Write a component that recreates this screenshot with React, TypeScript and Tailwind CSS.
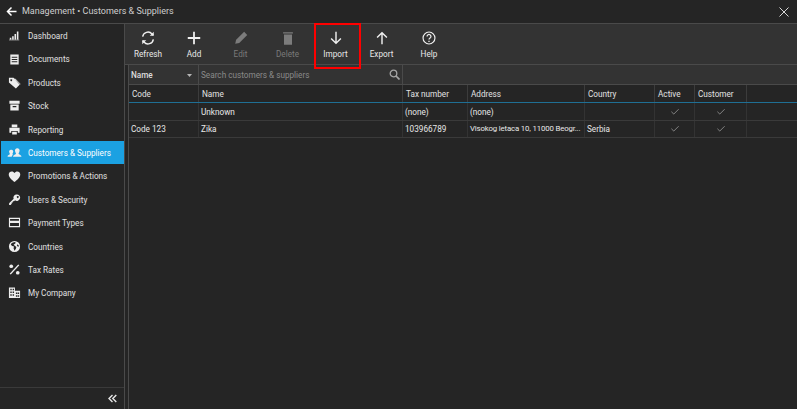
import React from "react";
import { Check } from "lucide-react";

const I = ({ children, w = 13 }: { children: React.ReactNode; w?: number }) => (
  <svg width={w} height={w} viewBox="0 0 14 14" fill="currentColor">{children}</svg>
);

const icons: Record<string, React.ReactNode> = {
  dash: <I w={11}><path d="M1 10h2v2H1zM4 8h2v4H4zM7 5h2v7H7zM10 2h2v10h-2zM0 12.300h13v.9H0z" /></I>,
  docs: <I><path fillRule="evenodd" d="M2.500 1.500h9v11h-9zM4 4v1h6V4zm0 2.500v1h6v-1zM4 9v1h6V9z" /></I>,
  prod: <I><path fillRule="evenodd" d="M1 2h5l7 7-4.500 4.500L1 7zm2.500 1.500a1 1 0 1 0 .01 0zM7 3h1l5.500 5.500-.8.8z" /></I>,
  stock: <I><path fillRule="evenodd" d="M1.500 2h11v3h-11zM2.500 6h9v6.500h-9zM5 7.500V9h4V7.500z" /></I>,
  rep: <I><path fillRule="evenodd" d="M4 1.500h6v3H4zM1.500 5h11v5.500H10.500V8.500h-7v2h-2zM4.500 9.500h5v3h-5z" /></I>,
  cust: <svg width="15" height="13" viewBox="0 0 16 14" fill="currentColor"><path d="M11 2.500a2.500 2.500 0 0 1 2.300 3.500c-.3 1-.9 1.600-.9 2.300 0 1 3.100 1 3.100 3.200H6.500c0-2.200 3.100-2.200 3.100-3.200 0-.7-.6-1.300-.9-2.300A2.500 2.500 0 0 1 11 2.500zM4.500 4a2 2 0 0 1 2 2.800c-.2.800-.7 1.300-.7 1.800 0 .4.300.6.700.8-.7.400-1.300 1-1.500 2.100H.5c0-2 2.500-1.900 2.500-2.900 0-.5-.5-1-.7-1.800A2 2 0 0 1 4.500 4z" /></svg>,
  heart: <I><path d="M7 13C4 10.500.8 8 .8 4.800.8 2.800 2.300 1.500 4 1.500c1.300 0 2.400.7 3 1.800.6-1.100 1.700-1.800 3-1.800 1.700 0 3.200 1.300 3.200 3.300C13.200 8 10 10.500 7 13z" /></I>,
  key: <I><path fillRule="evenodd" d="M9.500 1.500a3.500 3.500 0 1 1-1.900 6.400L6.500 9H5.200v1.300H4v1.300L2.800 12.800H1.200v-1.700l4.900-4.800A3.500 3.500 0 0 1 9.500 1.500zm1 1.800a1 1 0 1 0 .01 0z" /></I>,
  card: <I><path fillRule="evenodd" d="M1 2h12v10H1zM2.200 3.200v2h9.600v-2zM2.200 7.500v3.300h9.600V7.500z" /></I>,
  globe: <I><path fillRule="evenodd" d="M7 1a6 6 0 1 1 0 12A6 6 0 0 1 7 1zM4 3.300 3 5l1.500 1.500L6.500 7 6 9l1 2.500 1.500-2 .5-2-2-1.500-1-1 1.500-1L8.500 3 7 2.200zM10 4.500l-.5 1.500 1.500 1.500.8-1.300z" /></I>,
  tax: <I><path d="M11 1.500l1.200 1L3 12.500l-1.200-1z" /><circle cx="3.500" cy="3.500" r="2" /><circle cx="10.500" cy="10.500" r="2" /></I>,
  co: <I><path fillRule="evenodd" d="M1 1.500h6.500V5H13v8H1zM2.500 3v1.500H4V3zm2.500 0v1.500h1.500V3zM2.500 6v1.500H4V6zM5 6v1.500h1.500V6zm3.500 1v1.500H10V7zm2 0v1.500H12V7zM2.500 9v1.500H4V9zM5 9v1.500h1.500V9zm3.500 1v1.500H10V10zm2 0v1.500H12V10z" /></I>,
};

const nav: [string, string][] = [
  ["dash", "Dashboard"], ["docs", "Documents"], ["prod", "Products"], ["stock", "Stock"], ["rep", "Reporting"],
  ["cust", "Customers & Suppliers"], ["heart", "Promotions & Actions"], ["key", "Users & Security"],
  ["card", "Payment Types"], ["globe", "Countries"], ["tax", "Tax Rates"], ["co", "My Company"],
];

const S = { fill: "none", stroke: "currentColor", strokeWidth: 1.6 };
const tools: { l: string; w: string; dim?: boolean; red?: boolean; i: React.ReactNode }[] = [
  { l: "Refresh", w: "w-[46px]", i: <svg width="16" height="16" viewBox="0 0 18 18" {...S}><path d="M3 7.500A6 6 0 0 1 13.500 4.500L15 6" /><path d="M15.500 2v4.500H11" strokeWidth="0" fill="currentColor" /><path d="M15 10.500A6 6 0 0 1 4.500 13.500L3 12" /><path d="M2.500 16v-4.500H7" strokeWidth="0" fill="currentColor" /></svg> },
  { l: "Add", w: "w-[46px]", i: <svg width="16" height="16" viewBox="0 0 18 18" fill="currentColor"><path d="M8 2h2v6h6v2h-6v6H8v-6H2V8h6z" /></svg> },
  { l: "Edit", w: "w-[47px]", dim: true, i: <svg width="16" height="16" viewBox="0 0 18 18" fill="currentColor"><path d="M12.500 2 16 5.500 7 14.500l-4.500 1 1-4.500z" /></svg> },
  { l: "Delete", w: "w-[47px]", dim: true, i: <svg width="16" height="16" viewBox="0 0 18 18" fill="currentColor"><path d="M3.500 2.500h11V4h-11zM4.500 5h9v11.500h-9z" /></svg> },
  { l: "Import", w: "w-[49px]", red: true, i: <svg width="16" height="16" viewBox="0 0 18 18" {...S}><path d="M9 2v13M3.500 9.500 9 15l5.500-5.500" /></svg> },
  { l: "Export", w: "w-[43px]", i: <svg width="16" height="16" viewBox="0 0 18 18" {...S}><path d="M9 16V3M3.500 8.500 9 3l5.500 5.500" /></svg> },
  { l: "Help", w: "w-[52px]", i: <svg width="16" height="16" viewBox="0 0 18 18" fill="none" stroke="currentColor" strokeWidth="1.300"><circle cx="9" cy="9" r="6.700" /><path d="M6.800 7.200a2.200 2.200 0 1 1 3.400 1.900c-.8.500-1.200.9-1.200 1.700" strokeWidth="1.400" /><path d="M9 12v1.400" strokeWidth="1.500" /></svg> },
];

const cols = ["w-[70px]", "w-[204px]", "w-[65px]", "w-[117px]", "w-[70px]", "w-[40px]", "w-[52px]", "flex-1"];
const heads = ["Code", "Name", "Tax number", "Address", "Country", "Active", "Customer", ""];
const rows = [
  ["", "Unknown", "(none)", "(none)", "", "c", "c", ""],
  ["Code 123", "Zika", "103966789", "Visokog letaca 10, 11000 Beogr...", "Serbia", "c", "c", ""],
];

export default function App() {
  return (
    <div className="w-[797px] h-[409px] overflow-hidden flex flex-col bg-[#252525] text-[#e6e6e6] text-[8.2px] font-['Roboto',sans-serif]">
      <header className="h-[24px] shrink-0 flex items-center bg-[#252525] border-b border-[#4a4a4a]">
        <svg className="ml-[6px] text-white" width="11" height="11" viewBox="0 0 11 11" fill="none" stroke="currentColor" strokeWidth="1.500"><path d="M10.500 5.500H1.500M5.500 1.500l-4 4 4 4" /></svg>
        <span className="ml-[5px] text-[9px] text-[#cfcfcf]">Management • Customers &amp; Suppliers</span>
        <svg className="ml-auto mr-[8px] text-[#d8d8d8]" width="10" height="10" viewBox="0 0 10 10" stroke="currentColor" strokeWidth="1"><path d="M.5.500l9 9M9.500.500l-9 9" /></svg>
      </header>
      <div className="flex-1 flex min-h-0">
        <aside className="w-[125px] shrink-0 flex flex-col border-r border-[#4a4a4a] bg-[#252525]">
          <nav className="flex-1">
            {nav.map(([ic, l]) => {
              const a = l.startsWith("Customers");
              return (
                <div key={l} className={`h-[23.4px] flex items-center ml-[1px] ${a ? "bg-[#1ba1e2] text-white" : ""}`}>
                  <span className="w-[27px] shrink-0 flex justify-center text-[#eeeeee]">{icons[ic]}</span>
                  <span className={`pt-[1px] ${a ? "text-white" : "text-[#e0e0e0]"}`}>{l}</span>
                </div>
              );
            })}
          </nav>
          <div className="h-[22px] shrink-0 flex items-center justify-end pr-[7px] border-t border-[#3a3a3a]">
            <svg width="9" height="9" viewBox="0 0 9 9" fill="none" stroke="#e5e5e5" strokeWidth="1.400"><path d="M4.500 1 1 4.500 4.500 8M8.300 1 4.800 4.500 8.300 8" /></svg>
          </div>
        </aside>
        <main className="flex-1 flex flex-col min-w-0">
          <div className="h-[41px] shrink-0 flex bg-[#333333] border-b border-[#4a4a4a]">
            {tools.map(t => (
              <div key={t.l} className={`${t.w} shrink-0 relative flex flex-col items-center pt-[6px] ${t.dim ? "text-[#7c7c7c]" : "text-[#f0f0f0]"}`}>
                {t.i}
                <span className={`mt-[2px] leading-[12px] ${t.dim ? "text-[#7a7a7a]" : "text-[#e8e8e8]"}`}>{t.l}</span>
                {t.red && <div className="absolute left-[3px] -top-[1px] w-[47px] h-[46px] border-[2px] border-[#ff0000]" />}
              </div>
            ))}
          </div>
          <div className="flex-1 ml-[3px] border-l border-[#4a4a4a] flex flex-col min-h-0">
            <div className="h-[20px] shrink-0 flex items-center bg-[#333333] border-b border-[#4a4a4a]">
              <div className="w-[70px] h-full flex items-center pl-[2px] pr-[6px] pt-[1px] border-r border-[#4a4a4a] font-medium text-[#dddddd]">
                Name
                <svg className="ml-auto" width="5" height="3" viewBox="0 0 5 3" fill="#b5b5b5"><path d="M0 0h5L2.500 3z" /></svg>
              </div>
              <div className="w-[204px] h-full flex items-center pl-[2px] pr-[2px] pt-[1px] border-r border-[#4a4a4a] text-[#8a8a8a]">
                Search customers &amp; suppliers
                <svg className="ml-auto -mt-[1px]" width="11" height="11" viewBox="0 0 11 11" fill="none" stroke="#a5a5a5" strokeWidth="1.300"><circle cx="4.500" cy="4.500" r="3.300" /><path d="M7 7l3.500 3.500" strokeWidth="1.700" /></svg>
              </div>
            </div>
            <div className="h-[18px] shrink-0 flex border-b border-[#1f6f94] bg-[#252525]">
              {heads.map((h, i) => (
                <div key={i} className={`${cols[i]} shrink-0 flex items-center pl-[3px] pt-[2px] border-r border-[#3c3c3c] last:border-r-0 text-[#e2e2e2]`}>{h}</div>
              ))}
            </div>
            {rows.map((r, ri) => (
              <div key={ri} className="h-[17.500px] shrink-0 flex border-b border-[#3a3a3a]">
                {r.map((c, i) => (
                  <div key={i} className={`${cols[i]} shrink-0 flex items-center pl-[2px] pt-[1px] border-r border-[#333333] last:border-r-0 whitespace-nowrap overflow-hidden text-[#e8e8e8] ${c === "c" ? "justify-center !pl-0" : ""} ${c.length > 20 ? "text-[7.8px] tracking-[-0.15px]" : ""}`}>
                    {c === "c" ? <Check size={10} strokeWidth={1.2} className="text-[#e0e0e0]" /> : c}
                  </div>
                ))}
              </div>
            ))}
          </div>
        </main>
      </div>
    </div>
  );
}
